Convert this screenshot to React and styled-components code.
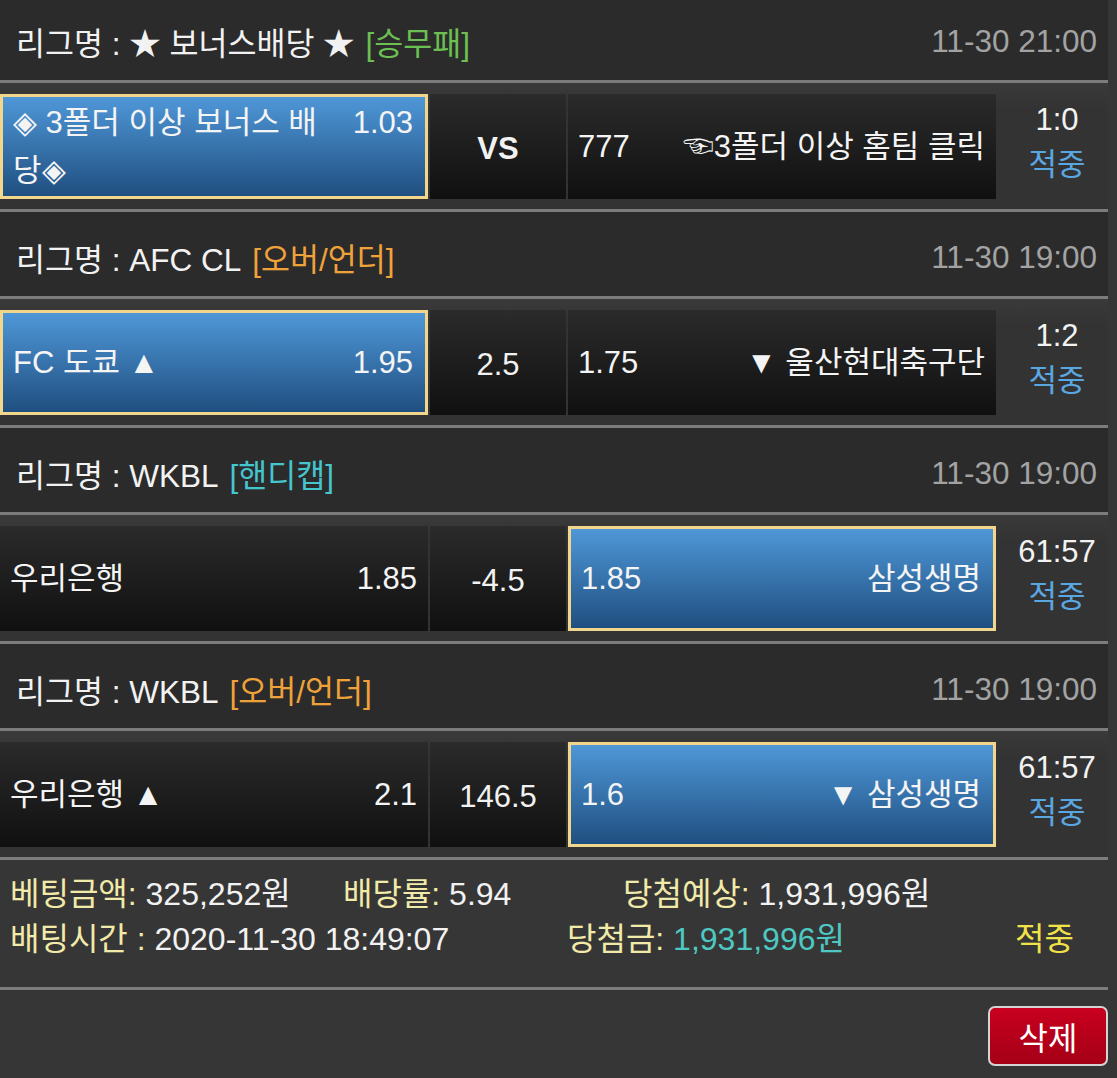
import React from "react";
import styled, { createGlobalStyle } from "styled-components";

const GlobalStyle = createGlobalStyle`
  body {
    margin: 0;
    background: #363636;
    font-family: "Liberation Sans", "Noto Sans CJK KR", sans-serif;
  }
`;

const games = [
  {
    league: "★ 보너스배당 ★",
    type: "[승무패]",
    typeColor: "#6cbf52",
    date: "11-30 21:00",
    home: "◈ 3폴더 이상 보너스 배당◈",
    homeOdds: "1.03",
    mid: "VS",
    away: "☜3폴더 이상 홈팀 클릭",
    awayOdds: "777",
    pick: "home",
    score: "1:0",
  },
  {
    league: "AFC CL",
    type: "[오버/언더]",
    typeColor: "#f0a23a",
    date: "11-30 19:00",
    home: "FC 도쿄 ▲",
    homeOdds: "1.95",
    mid: "2.5",
    away: "▼ 울산현대축구단",
    awayOdds: "1.75",
    pick: "home",
    score: "1:2",
  },
  {
    league: "WKBL",
    type: "[핸디캡]",
    typeColor: "#45c6cf",
    date: "11-30 19:00",
    home: "우리은행",
    homeOdds: "1.85",
    mid: "-4.5",
    away: "삼성생명",
    awayOdds: "1.85",
    pick: "away",
    score: "61:57",
  },
  {
    league: "WKBL",
    type: "[오버/언더]",
    typeColor: "#f0a23a",
    date: "11-30 19:00",
    home: "우리은행 ▲",
    homeOdds: "2.1",
    mid: "146.5",
    away: "▼ 삼성생명",
    awayOdds: "1.6",
    pick: "away",
    score: "61:57",
  },
];

const App = () => {
  return (
    <>
      <GlobalStyle />
      <Wrapper>
        {games.map((g, i) => (
          <div key={i}>
            <Header>
              <span>
                리그명 : {g.league}
                <Type $color={g.typeColor}>{g.type}</Type>
              </span>
              <DateText>{g.date}</DateText>
            </Header>
            <BetRow>
              <Cell $selected={g.pick === "home"}>
                <Inner>
                  <Odds $side="right">{g.homeOdds}</Odds>
                  {g.home}
                </Inner>
              </Cell>
              <MidCell $bold={g.mid === "VS"}>{g.mid}</MidCell>
              <Cell $selected={g.pick === "away"}>
                <Inner $align="right">
                  <Odds $side="left">{g.awayOdds}</Odds>
                  {g.away}
                </Inner>
              </Cell>
              <Score>
                <span>{g.score}</span>
                <Result>적중</Result>
              </Score>
            </BetRow>
          </div>
        ))}
        <Summary>
          <SumLine>
            <SumItem $w={333}>
              <Label>베팅금액:</Label> 325,252원
            </SumItem>
            <SumItem $w={280}>
              <Label>배당률:</Label> 5.94
            </SumItem>
            <SumItem>
              <Label>당첨예상:</Label> 1,931,996원
            </SumItem>
          </SumLine>
          <SumLine>
            <SumItem $w={557}>
              <Label>배팅시간 :</Label> 2020-11-30 18:49:07
            </SumItem>
            <SumItem $w={448}>
              <Label>당첨금:</Label> <Win>1,931,996원</Win>
            </SumItem>
            <SumItem>
              <Hit>적중</Hit>
            </SumItem>
          </SumLine>
        </Summary>
        <Footer>
          <DeleteButton>삭제</DeleteButton>
        </Footer>
      </Wrapper>
    </>
  );
};

export default App;

const Wrapper = styled.div`
  width: 1108px;
  margin-top: -4px;
  color: #f2f2f2;
  font-size: 31px;
`;

const Header = styled.div`
  height: 78px;
  padding: 6px 11px 0 16px;
  display: flex;
  align-items: center;
  justify-content: space-between;
  background: #2b2b2b;
  border-bottom: 3px solid #7c7c7c;
  font-size: 31.5px;
`;

const Type = styled.span`
  color: ${(p) => p.$color};
  margin-left: 11px;
`;

const DateText = styled.span`
  color: #a3a3a3;
`;

const BetRow = styled.div`
  display: grid;
  grid-template-columns: 428px 136px 428px 1fr;
  gap: 2px;
  padding: 11px 0 10px;
  background: linear-gradient(#3a3a3a, #333 20%);
  border-bottom: 3px solid #7c7c7c;
`;

const Cell = styled.div`
  height: 105px;
  box-sizing: border-box;
  display: flex;
  align-items: center;
  padding: ${(p) => (p.$selected ? "0 12px 0 10px" : "0 11px 0 10px")};
  background: ${(p) =>
    p.$selected
      ? "linear-gradient(#4f97d8, #1f4f80)"
      : "linear-gradient(#2b2b2b, #101010)"};
  border: ${(p) => (p.$selected ? "3px solid #f2d68c" : "none")};
  color: #f4f4f4;
  line-height: 48px;
`;

const Inner = styled.div`
  width: 100%;
  text-align: ${(p) => p.$align || "left"};
`;

const Odds = styled.span`
  float: ${(p) => p.$side};
  margin-left: ${(p) => (p.$side === "right" ? "14px" : "0")};
`;

const MidCell = styled.div`
  height: 105px;
  display: flex;
  align-items: center;
  justify-content: center;
  background: linear-gradient(#2b2b2b, #101010);
  font-weight: ${(p) => (p.$bold ? 700 : 400)};
  padding-top: 4px;
  box-sizing: border-box;
`;

const Score = styled.div`
  display: flex;
  flex-direction: column;
  align-items: center;
  justify-content: center;
  padding-left: 8px;
  line-height: 45px;
  margin-top: -10px;
`;

const Result = styled.span`
  color: #5aa6e0;
`;

const Summary = styled.div`
  padding: 12px 0 25px 10px;
  border-bottom: 3px solid #7c7c7c;
  line-height: 45px;
  font-size: 32px;
`;

const SumLine = styled.div`
  display: flex;
`;

const SumItem = styled.div`
  width: ${(p) => (p.$w ? `${p.$w}px` : "auto")};
  flex-shrink: 0;
  white-space: nowrap;
`;

const Label = styled.span`
  color: #f2eaa8;
`;

const Win = styled.span`
  color: #4ec8c2;
`;

const Hit = styled.span`
  color: #f2e24a;
`;

const Footer = styled.div`
  display: flex;
  justify-content: flex-end;
  padding-top: 16px;
`;

const DeleteButton = styled.button`
  width: 120px;
  height: 60px;
  border: 2px solid #d4d4d4;
  border-radius: 7px;
  background: linear-gradient(#c8001f, #a50016);
  color: #fff;
  font-family: inherit;
  font-size: 32px;
  padding: 0;
`;
